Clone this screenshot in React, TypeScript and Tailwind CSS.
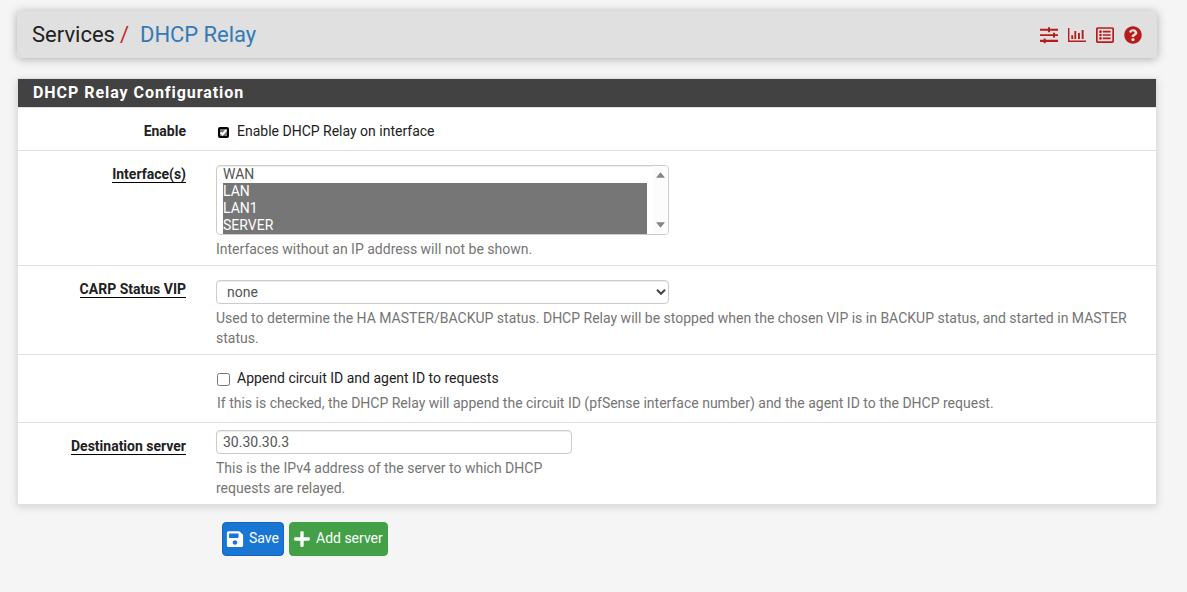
import type { ReactNode } from 'react';
import { FaSave, FaPlus, FaQuestionCircle, FaRegListAlt } from 'react-icons/fa';

function SlidersIcon() {
  return (
    <svg className="h-[18px] w-[18px]" viewBox="0 0 18 18" fill="currentColor">
      <path d="M0 2.7h18v2.1H0zM8 1.3h2v4.9H8zM0 8.2h18v1.9H0zM13 6.7h2v4.9h-2zM0 13.8h18v2.1H0zM3.7 12.4h2v4.9h-2z" />
    </svg>
  );
}

function ChartIcon() {
  return (
    <svg className="h-[18px] w-[18px]" viewBox="0 0 18 18" fill="currentColor">
      <path d="M0 2h1.4v12.5H18V16H0zM3.3 9.2h1.9v3.8H3.3zM6.4 5h1.8v8H6.4zM10 7h1.9v6H10zM13.7 4h1.9v9h-1.9z" />
    </svg>
  );
}

function Row({ label, underlined = true, className, children }: { label?: string; underlined?: boolean; className: string; children: ReactNode }) {
  return (
    <div className={`flex border-b border-[#e0e0e0] last:border-b-0 ${className}`}>
      <div className="w-[168px] shrink-0 text-right font-bold leading-[18px] text-[#212121]">
        {label && <span className={underlined ? 'inline-block h-[18px] border-b border-black' : ''}>{label}</span>}
      </div>
      <div className="ml-[30px] min-w-0 flex-1">{children}</div>
    </div>
  );
}

export default function App() {
  return (
    <div className="h-[592px] overflow-hidden bg-[#f5f5f5] pl-[17px] pr-[30px] pt-[11px] font-['Roboto',sans-serif] text-[14px] leading-5 text-[#212121]">
      <header className="flex h-[47px] items-center justify-between rounded-[4px] bg-[#e0e0e0] pl-[15px] pr-[15px] shadow-[0_1px_10px_rgba(0,0,0,0.3)]">
        <h1 className="flex text-[22px] leading-[30px]">
          <span>Services</span>
          <span className="ml-[5px] text-[#c62828]">/</span>
          <span className="ml-[11px] tracking-[-0.05px] text-[#337ab7]">DHCP Relay</span>
        </h1>
        <nav className="flex items-center gap-[10px] pt-px text-[18px] text-[#b71c1c]">
          <SlidersIcon />
          <ChartIcon />
          <FaRegListAlt />
          <FaQuestionCircle />
        </nav>
      </header>
      <main className="mt-5 w-[1140px] border border-[#e0e0e0] bg-white shadow-[0_2px_8px_rgba(0,0,0,0.15)]">
        <h2 className="h-[29px] border-b border-[#e0e0e0] bg-[#424242] pl-[15px] text-[16px] font-bold leading-[27px] tracking-[0.95px] text-white">DHCP Relay Configuration</h2>
        <Row label="Enable" underlined={false} className="h-[43px] pt-[14px]">
          <label className="-mt-px flex items-center">
            <span className="ml-[2px] mt-[2px] flex h-[11px] w-[11px] items-center justify-center rounded-[2px] border-2 border-black bg-[#757575]">
              <svg className="h-[7px] w-[7px]" viewBox="0 0 7 7" fill="none" stroke="white" strokeWidth="2"><path d="M.5 3.5 2.5 5.5 6.3 1" /></svg>
            </span>
            <span className="ml-2">Enable DHCP Relay on interface</span>
          </label>
        </Row>
        <Row label="Interface(s)" className="h-[115px] pt-[14px]">
          <div className="flex h-[70px] w-[453px] overflow-hidden rounded-[4px] border border-[#ccc] pl-[6px] text-[#555] shadow-[inset_0_1px_1px_rgba(0,0,0,0.075)]">
            <div className="w-[424px] leading-[17px]">
              <div>WAN</div>
              <div className="bg-[#767676] text-white">LAN</div>
              <div className="bg-[#767676] text-white">LAN1</div>
              <div className="bg-[#767676] text-white">SERVER</div>
            </div>
            <div className="ml-[6px] flex flex-1 flex-col items-center justify-between bg-[#fcfcfc] py-[6px] text-[#858585]">
              <svg className="h-[6px] w-[9px]" viewBox="0 0 9 6" fill="currentColor"><path d="M4.5.3 9 5.7H0z" /></svg>
              <svg className="h-[6px] w-[9px]" viewBox="0 0 9 6" fill="currentColor"><path d="M0 .3h9L4.5 5.7z" /></svg>
            </div>
          </div>
          <p className="mt-1 text-[#757575]">Interfaces without an IP address will not be shown.</p>
        </Row>
        <Row label="CARP Status VIP" className="h-[89px] pt-[14px]">
          <div className="flex h-6 w-[453px] items-center justify-between rounded-[4px] border border-[#ccc] pl-[10px] pr-[2px] text-[#555] shadow-[inset_0_1px_1px_rgba(0,0,0,0.075)]">
            <span>none</span>
            <svg className="h-[6px] w-[10px]" viewBox="0 0 10 6" fill="none" stroke="#444" strokeWidth="2"><path d="M1 .8 5 4.8 9 .8" /></svg>
          </div>
          <p className="mt-1 text-[#757575]">Used to determine the HA MASTER/BACKUP status. DHCP Relay will be stopped when the chosen VIP is in BACKUP status, and started in MASTER<br />status.</p>
        </Row>
        <Row className="h-[68px] pt-[13px]">
          <label className="flex items-center">
            <span className="ml-px mt-[2px] h-[13px] w-[13px] rounded-[2.5px] border border-[#767676] bg-white" />
            <span className="ml-[7px]">Append circuit ID and agent ID to requests</span>
          </label>
          <p className="ml-px mt-[5px] text-[#757575]">If this is checked, the DHCP Relay will append the circuit ID (pfSense interface number) and the agent ID to the DHCP request.</p>
        </Row>
        <Row label="Destination server" className="h-[81px] items-start pt-[7px] [&>div:first-child]:pt-[7px]">
          <div className="flex h-6 w-[356px] items-center rounded-[4px] border border-[#ccc] pl-[6px] text-[#555] shadow-[inset_0_1px_1px_rgba(0,0,0,0.075)]">30.30.30.3</div>
          <p className="mt-1 text-[#757575]">This is the IPv4 address of the server to which DHCP<br />requests are relayed.</p>
        </Row>
      </main>
      <div className="ml-[205px] mt-[17px] flex gap-[5px] text-white">
        <button className="flex h-[34px] w-[62px] items-center rounded-[4px] border border-[#1565c0] bg-[#1976d2] pb-px pl-[4px]">
          <FaSave className="h-[18px] w-[16px] shrink-0 scale-x-[1.05]" />
          <span className="ml-[6px] pb-px">Save</span>
        </button>
        <button className="flex h-[34px] w-[99px] items-center rounded-[4px] border border-[#43a047] bg-[#43a047] pb-px pl-[4px]">
          <FaPlus className="h-[18px] w-[16px] shrink-0" />
          <span className="ml-[6px] whitespace-nowrap pb-px">Add server</span>
        </button>
      </div>
    </div>
  );
}
